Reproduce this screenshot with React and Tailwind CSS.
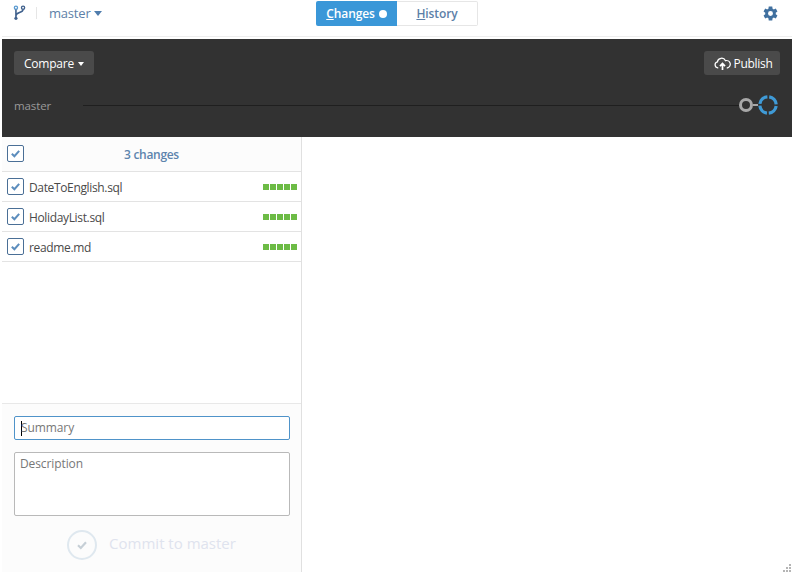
import React from "react";

const font = { fontFamily: '"Open Sans", "Liberation Sans", sans-serif' };

function Check() {
  return (
    <span className="flex h-[17px] w-[17px] shrink-0 items-center justify-center rounded-[2px] border border-[#4a6f96] bg-white">
      <svg viewBox="0 0 12 12" className="h-[11px] w-[11px]">
        <path d="M2 6.300 L4.800 9 L10 3.200" fill="none" stroke="#5c8dbd" strokeWidth="2.200" />
      </svg>
    </span>
  );
}

function Bars() {
  return (
    <span className="flex gap-px">
      {[0, 1, 2, 3, 4].map((i) => (
        <span key={i} className="h-[6px] w-[6px] bg-[#6cbb45]" />
      ))}
    </span>
  );
}

function Row({ name }) {
  return (
    <div className="flex h-[30px] items-center border-b border-[#e3e3e3] pl-[5px] pr-[4px]">
      <Check />
      <span className="ml-[5px] mt-[3px] flex-1 text-[12px] tracking-[-0.35px] text-[#4a4a4a]">{name}</span>
      <Bars />
    </div>
  );
}

export default function App() {
  return (
    <div className="flex h-[585px] w-[799px] flex-col overflow-hidden bg-white" style={font}>
      <div className="ml-[2px] flex w-[790px] flex-col">
        <header className="relative flex h-[37px] items-start border-b border-[#eeeeee] pt-[5px]">
          <svg viewBox="0 0 14 18" className="ml-[11px] h-[16px] w-[13px]">
            <circle cx="3" cy="3" r="1.800" fill="none" stroke="#5b9bd1" strokeWidth="1.500" />
            <circle cx="11" cy="3" r="1.800" fill="none" stroke="#40618d" strokeWidth="1.500" />
            <path d="M3 5 V14 M11 5 C11 9 3 8 3 12" fill="none" stroke="#40618d" strokeWidth="1.800" />
            <circle cx="3" cy="15" r="1.800" fill="#40618d" />
          </svg>
          <span className="ml-[10px] mt-[2px] h-[12px] w-px bg-[#e6e6e6]" />
          <span className="ml-[12px] mt-[-1px] text-[13px] tracking-[-0.2px] text-[#5d7fa8]">master</span>
          <span className="ml-[3px] mt-[6px] h-0 w-0 border-x-[4px] border-t-[5px] border-x-transparent border-t-[#4f7cac]" />
          <div className="absolute left-[314px] top-[1px] flex h-[25px] w-[162px] text-[12px] font-semibold tracking-[-0.1px]">
            <div className="flex w-[81px] items-center justify-center gap-[4px] rounded-l-[2px] bg-[#3a97d8] text-white">
              <span><u>C</u>hanges</span>
              <span className="h-[8px] w-[8px] rounded-full bg-white" />
            </div>
            <div className="flex w-[81px] items-center justify-center rounded-r-[2px] border border-l-0 border-[#e6e6e6] text-[#5d7fa8]">
              <span><u>H</u>istory</span>
            </div>
          </div>
          <svg viewBox="0 0 24 24" className="absolute left-[760px] top-[5px] h-[17px] w-[17px]" fill="#40709f">
            <path fillRule="evenodd" d="M19.400 13a7.600 7.600 0 0 0 0-2l2.400-1.900-2.300-4-2.900 1.200a7.600 7.600 0 0 0-1.700-1L14.500 2h-5l-.400 3.300a7.600 7.600 0 0 0-1.700 1L4.500 5.100l-2.300 4L4.600 11a7.600 7.600 0 0 0 0 2l-2.400 1.900 2.300 4 2.900-1.200a7.600 7.600 0 0 0 1.700 1l.400 3.300h5l.400-3.300a7.600 7.600 0 0 0 1.700-1l2.900 1.200 2.300-4zM12 15.500a3.500 3.500 0 1 1 0-7 3.500 3.500 0 0 1 0 7z" />
          </svg>
        </header>

        <section className="mt-[2px] flex h-[98px] flex-col bg-[#323232] pl-[12px] pr-[12px] pt-[12px]">
          <div className="flex items-center justify-between">
            <div className="flex h-[24px] w-[80px] items-center justify-center gap-[4px] rounded-[3px] bg-[#4a4a4a] pt-[1px] text-[12px] font-medium tracking-[-0.2px] text-white">
              Compare
              <span className="h-0 w-0 border-x-[3px] border-t-[4px] border-x-transparent border-t-white" />
            </div>
            <div className="flex h-[24px] w-[76px] items-center justify-center gap-[3px] rounded-[3px] bg-[#4a4a4a] pl-[2px] pt-[1px] text-[12px] font-medium tracking-[-0.3px] text-white">
              <svg viewBox="0 0 20 16" className="h-[14px] w-[17px]">
                <path d="M5 12.500H4.500a3.500 3.500 0 0 1-.5-6.900 5 5 0 0 1 9.500-1.500 4.200 4.200 0 0 1 2.500 8.400H15" fill="none" stroke="#fff" strokeWidth="1.500" />
                <path d="M10 15V8 M7 10.500L10 7.500L13 10.500" fill="none" stroke="#fff" strokeWidth="2" />
              </svg>
              Publish
            </div>
          </div>
          <div className="mt-[20px] flex items-center pr-[2px]">
            <span className="mt-[2px] w-[69px] text-[11.5px] tracking-[-0.1px] text-[#9a9a9a]">master</span>
            <span className="h-px flex-1 bg-[#1f1f1f]" />
            <span className="h-[14px] w-[14px] rounded-full border-[3px] border-[#a8a8a8]" />
            <span className="h-[2px] w-[5px] bg-[#a8a8a8]" />
            <svg viewBox="0 0 20 20" className="h-[20px] w-[20px]">
              <circle cx="10" cy="10" r="8.200" fill="none" stroke="#3f9ad6" strokeWidth="3.200" strokeDasharray="11 1.880" strokeDashoffset="-1" />
            </svg>
          </div>
        </section>

        <main className="flex h-[435px]">
          <aside className="flex w-[300px] flex-col border-r border-[#e0e0e0]">
            <div className="relative flex h-[35px] items-center justify-center border-b border-[#e3e3e3] bg-[#fcfcfc]">
              <span className="absolute left-[5px] top-[8px]"><Check /></span>
              <span className="mt-[2px] text-[12px] font-semibold tracking-[-0.3px] text-[#5d84ad]">3 changes</span>
            </div>
            <Row name="DateToEnglish.sql" />
            <Row name="HolidayList.sql" />
            <Row name="readme.md" />
            <div className="h-[141px] bg-white" />
            <div className="flex flex-1 flex-col border-t border-[#e8e8e8] bg-[#fcfcfc] pl-[12px] pr-[11px] pt-[12px]">
              <div className="flex h-[24px] items-center rounded-[2px] border border-[#4f93c9] bg-white pl-[6px] text-[12px] text-[#777777]">
                <span className="h-[15px] w-px bg-black" />
                <span className="ml-[-1px] tracking-[-0.1px]">Summary</span>
              </div>
              <div className="mt-[12px] h-[64px] rounded-[2px] border border-[#b9b9b9] bg-white pl-[5px] pt-[2px] text-[12px] tracking-[-0.1px] text-[#777777]">
                Description
              </div>
              <div className="mt-[14px] flex items-center justify-center pr-[1px]">
                <span className="flex h-[30px] w-[30px] items-center justify-center rounded-full border-2 border-[#dfe8ef]">
                  <svg viewBox="0 0 12 12" className="h-[12px] w-[12px]">
                    <path d="M2 6.300L4.800 9L10 3.200" fill="none" stroke="#c6cfd6" strokeWidth="2.200" />
                  </svg>
                </span>
                <span className="ml-[12px] mt-[-3px] text-[15px] text-[#dfe3ee]">Commit to master</span>
              </div>
            </div>
          </aside>
          <div className="flex-1 bg-white" />
        </main>
      </div>
      <div className="relative flex-1">
        <svg viewBox="0 0 10 10" className="absolute left-[782px] top-[-9px] h-[10px] w-[10px]" fill="#b5b5b5">
          <rect x="7" y="1" width="2" height="2" /><rect x="4" y="4" width="2" height="2" /><rect x="7" y="4" width="2" height="2" /><rect x="1" y="7" width="2" height="2" /><rect x="4" y="7" width="2" height="2" /><rect x="7" y="7" width="2" height="2" />
        </svg>
      </div>
    </div>
  );
}
